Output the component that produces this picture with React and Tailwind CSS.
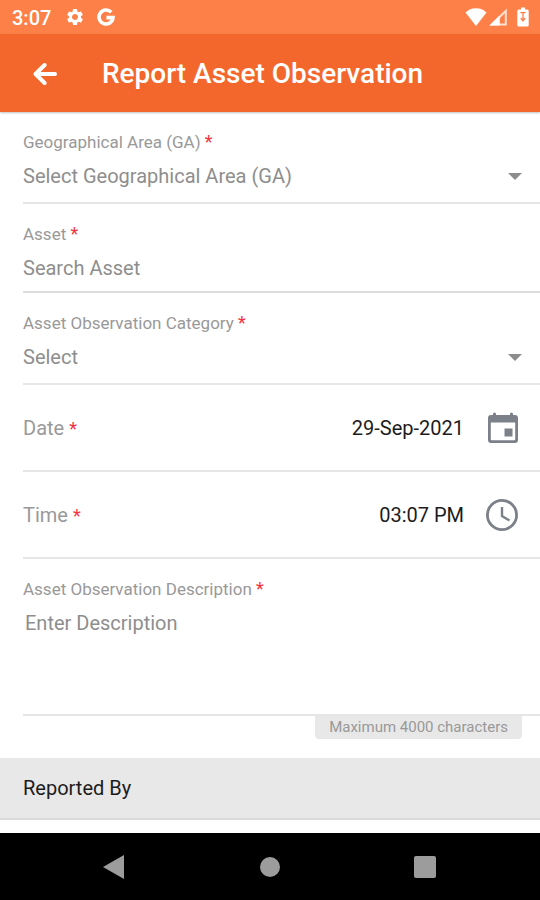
import { useState } from 'react';
import { MdSettings } from 'react-icons/md';
import clsx from 'clsx';

const GoogleIcon = () => (
  <svg width="18" height="18" viewBox="0 0 18 18" fill="none" stroke="currentColor" strokeWidth="3.6" aria-hidden="true">
    <path d="M14.2 4.3A7 7 0 1 0 16 9.6H9.4" />
  </svg>
);

const WifiIcon = () => (
  <svg width="22" height="18" viewBox="0 0 22 18" fill="currentColor" aria-hidden="true">
    <path d="M11 18L0.5 4.6C3.2 1.8 6.8 0.3 11 0.3s7.8 1.5 10.5 4.3z" />
  </svg>
);

const SignalIcon = () => (
  <svg width="18" height="18" viewBox="0 0 18 18" aria-hidden="true">
    <path d="M17.8 0.4V17.6H0.4zM15.8 5.2L10.6 10.4V15.6H15.8z" fill="currentColor" fillRule="evenodd" opacity="0.75" />
    <path d="M10.6 7.5V17.6H0.4z" fill="currentColor" />
  </svg>
);

const BatteryIcon = () => (
  <svg width="12" height="20" viewBox="0 0 12 20" aria-hidden="true">
    <path d="M4 0.5h4v2h2.2a1.5 1.5 0 0 1 1.5 1.5v14a1.5 1.5 0 0 1-1.5 1.5H1.8a1.5 1.5 0 0 1-1.5-1.5V4a1.5 1.5 0 0 1 1.5-1.5H4z" fill="currentColor" />
    <path d="M6 6V14M3.8 11L6 14l2.2-3M3.4 5.6h5.2" fill="none" stroke="#fd8048" strokeWidth="1.3" />
  </svg>
);

const BackIcon = () => (
  <svg width="24" height="24" viewBox="0 0 24 24" fill="none" stroke="currentColor" strokeWidth="4" strokeLinecap="round" aria-hidden="true">
    <path d="M11.6 3L2.6 12L11.6 21" strokeLinejoin="round" />
    <path d="M3 12H22" />
  </svg>
);

const CalendarIcon = () => (
  <svg width="34" height="34" viewBox="0 0 34 34" aria-hidden="true">
    <path
      d="M8.5 1.5a1.5 1.5 0 0 1 1.5 1.5v1h14v-1a1.5 1.5 0 0 1 3 0v1h2a3 3 0 0 1 3 3v22a3 3 0 0 1-3 3H5a3 3 0 0 1-3-3V7a3 3 0 0 1 3-3h2v-1a1.5 1.5 0 0 1 1.5-1.5zM4.8 11.5v16.7a1 1 0 0 0 1 1h22.4a1 1 0 0 0 1-1V11.5z"
      fill="currentColor"
      fillRule="evenodd"
    />
    <rect x="18.5" y="17.5" width="8" height="8" fill="currentColor" />
  </svg>
);

const ClockIcon = () => (
  <svg width="34" height="34" viewBox="0 0 34 34" fill="none" stroke="currentColor" aria-hidden="true">
    <circle cx="16" cy="17" r="14.6" strokeWidth="2.8" />
    <path d="M16 9v9l7.5 4.5" strokeWidth="2.4" />
  </svg>
);

const Required = () => <span className="text-[18px] leading-5 text-[#f4333f]">*</span>;

const FieldLabel = ({ htmlFor, children }) => (
  <label htmlFor={htmlFor} className="block text-[17px] leading-5 text-[#999999]">
    {children} <Required />
  </label>
);

const SelectField = ({ id, label, placeholder }) => (
  <div className="border-b-2 border-[#e6e6e6] pt-5 pb-3">
    <FieldLabel htmlFor={id}>{label}</FieldLabel>
    <div className="relative mt-[10px]">
      <select id={id} className="block h-7 w-full appearance-none bg-transparent text-[20px] leading-7 text-[#8e8e8e] outline-none">
        <option>{placeholder}</option>
      </select>
      <svg className="pointer-events-none absolute top-[11px] right-[18px]" width="14" height="7" viewBox="0 0 14 7" aria-hidden="true">
        <path d="M0 0h14L7 7z" fill="#8c8c8c" />
      </svg>
    </div>
  </div>
);

const PickerField = ({ id, label, value, icon, buttonLabel }) => (
  <div className="flex h-[87px] items-center border-b-2 border-[#e6e6e6] pr-5">
    <label htmlFor={id} className="text-[20px] leading-7 text-[#999999]">
      {label} <Required />
    </label>
    <input
      id={id}
      type="text"
      readOnly
      value={value}
      className="h-7 min-w-0 flex-1 bg-transparent text-right text-[20px] leading-7 text-[#1c1c1c] outline-none"
    />
    <button type="button" aria-label={buttonLabel} className="ml-[22px] text-[#7c8088]">
      {icon}
    </button>
  </div>
);

const NavButton = ({ label, className, children }) => (
  <button type="button" aria-label={label} className={clsx('flex items-center justify-center text-[#9c9c9c]', className)}>
    <svg width="24" height="24" viewBox="0 0 24 24" fill="currentColor" aria-hidden="true">
      {children}
    </svg>
  </button>
);

const App = () => {
  const [asset, setAsset] = useState('');
  const [description, setDescription] = useState('');

  return (
    <div className="flex min-h-screen flex-col bg-white font-['Roboto',sans-serif]">
      {/* Status bar */}
      <div className="flex h-[34px] items-center bg-[#fd8048] pr-[11px] pl-3 text-white">
        <span className="pt-[2px] text-[20px] leading-6 font-medium">3:07</span>
        <span className="ml-[14px] flex items-center gap-3">
          <MdSettings size={20} />
          <GoogleIcon />
        </span>
        <span className="ml-auto flex items-center gap-[2px]">
          <WifiIcon />
          <SignalIcon />
          <span className="ml-2">
            <BatteryIcon />
          </span>
        </span>
      </div>

      {/* Title bar */}
      <header className="flex h-[78px] items-center bg-[#f4672c] pt-[2px] pl-[33px] text-white shadow-[0_1px_2px_rgba(0,0,0,0.25)]">
        <button type="button" aria-label="Back">
          <BackIcon />
        </button>
        <h1 className="ml-[45px] text-[28px] leading-8 font-medium">Report Asset Observation</h1>
      </header>

      <form>
        <div className="pl-[23px]">
          <SelectField id="area" label="Geographical Area (GA)" placeholder="Select Geographical Area (GA)" />

          <div className="border-b-2 border-[#dcdcdc] pt-5 pb-[9px]">
            <FieldLabel htmlFor="asset">Asset</FieldLabel>
            <input
              id="asset"
              type="text"
              placeholder="Search Asset"
              value={asset}
              onChange={(e) => setAsset(e.target.value)}
              className="mt-[10px] block h-7 w-full bg-transparent text-[20px] leading-7 text-[#1c1c1c] outline-none placeholder:text-[#8e8e8e]"
            />
          </div>

          <SelectField id="category" label="Asset Observation Category" placeholder="Select" />
          <PickerField id="date" label="Date" value="29-Sep-2021" buttonLabel="Pick date" icon={<CalendarIcon />} />
          <PickerField id="time" label="Time" value="03:07 PM" buttonLabel="Pick time" icon={<ClockIcon />} />

          <div className="border-b-2 border-[#e6e6e6] pt-5">
            <FieldLabel htmlFor="description">Asset Observation Description</FieldLabel>
            <textarea
              id="description"
              maxLength={4000}
              placeholder="Enter Description"
              value={description}
              onChange={(e) => setDescription(e.target.value)}
              className="mt-[10px] block h-[105px] w-full resize-none bg-transparent pl-[2px] text-[20px] leading-7 text-[#1c1c1c] outline-none placeholder:text-[#8e8e8e]"
            />
          </div>
          <div className="flex justify-end pr-[18px]">
            <p className="rounded-b-sm bg-[#e8e8e8] px-[14px] pt-[1px] pb-[2px] text-[15px] leading-5 text-[#999999]">
              Maximum 4000 characters
            </p>
          </div>
        </div>

        {/* Section heading */}
        <h2 className="mt-[19px] border-b-2 border-[#dadada] bg-[#e8e8e8] px-[23px] py-4 text-[20px] leading-7 text-[#1c1c1c]">
          Reported By
        </h2>
      </form>

      {/* System navigation */}
      <nav className="mt-auto grid h-[67px] grid-cols-[1fr_auto_1fr] items-center bg-black px-[102px]">
        <NavButton label="Go back" className="justify-self-start">
          <path d="M22 0v24L1 12z" />
        </NavButton>
        <NavButton label="Home">
          <circle cx="12" cy="12" r="10" />
        </NavButton>
        <NavButton label="Recent apps" className="justify-self-end">
          <rect x="0" y="1" width="22" height="22" rx="2" />
        </NavButton>
      </nav>
    </div>
  );
};

export default App;
